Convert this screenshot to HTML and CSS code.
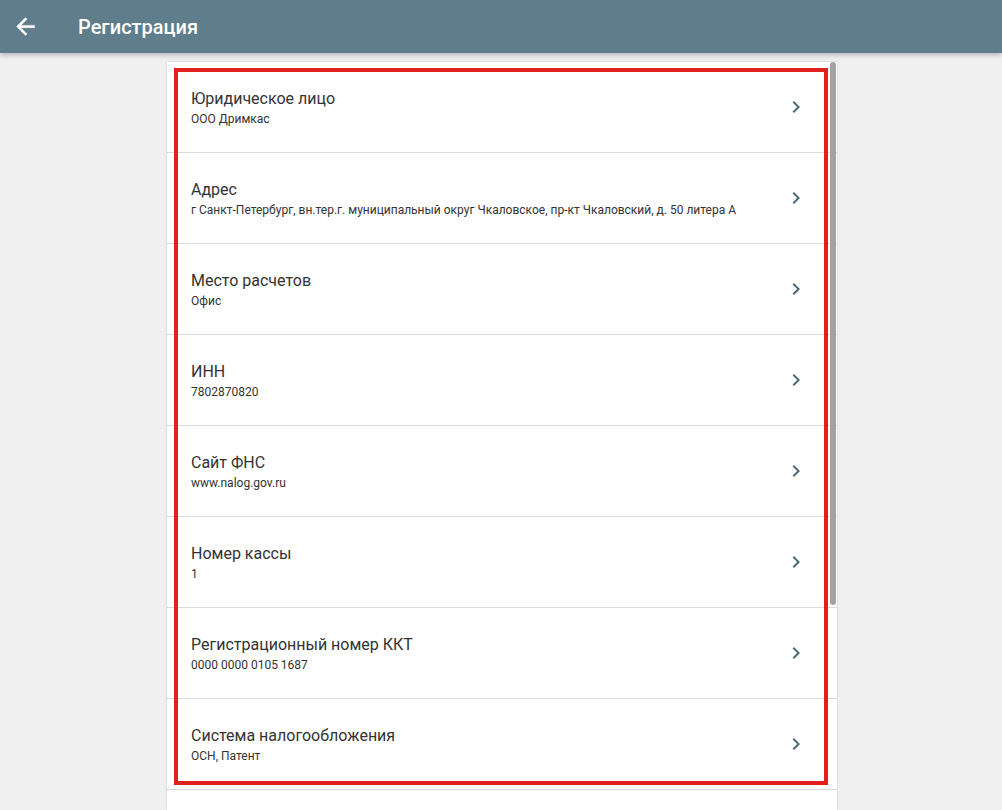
FILE: index.html
```html
<!DOCTYPE html>
<html lang="ru">
<head>
    <meta charset="UTF-8">
    <title>Регистрация</title>
    <link rel="stylesheet" href="styles.css">
</head>
<body>
<div class="app">
    <div class="top_bar">
        <span class="back_btn">
            <svg width="27" height="27" viewBox="0 0 24 24"><path fill="#fff" d="M20 11H7.83l5.59-5.59L12 4l-8 8 8 8 1.41-1.41L7.83 13H20v-2z" stroke="#fff" stroke-width="0.4"/></svg>
        </span>
        <span class="top_title">Регистрация</span>
    </div>

    <div class="content">
        <div class="card">
            <div class="row">
                <div class="row_text">
                    <p class="row_title">Юридическое лицо</p>
                    <p class="row_value">ООО Дримкас</p>
                </div>
                <svg class="chevron" width="24" height="24" viewBox="0 0 24 24"><path d="M10 6L8.59 7.41 13.17 12l-4.58 4.59L10 18l6-6z"/></svg>
            </div>
            <div class="row">
                <div class="row_text">
                    <p class="row_title">Адрес</p>
                    <p class="row_value">г Санкт-Петербург, вн.тер.г. муниципальный округ Чкаловское, пр-кт Чкаловский, д. 50 литера А</p>
                </div>
                <svg class="chevron" width="24" height="24" viewBox="0 0 24 24"><path d="M10 6L8.59 7.41 13.17 12l-4.58 4.59L10 18l6-6z"/></svg>
            </div>
            <div class="row">
                <div class="row_text">
                    <p class="row_title">Место расчетов</p>
                    <p class="row_value">Офис</p>
                </div>
                <svg class="chevron" width="24" height="24" viewBox="0 0 24 24"><path d="M10 6L8.59 7.41 13.17 12l-4.58 4.59L10 18l6-6z"/></svg>
            </div>
            <div class="row">
                <div class="row_text">
                    <p class="row_title">ИНН</p>
                    <p class="row_value">7802870820</p>
                </div>
                <svg class="chevron" width="24" height="24" viewBox="0 0 24 24"><path d="M10 6L8.59 7.41 13.17 12l-4.58 4.59L10 18l6-6z"/></svg>
            </div>
            <div class="row">
                <div class="row_text">
                    <p class="row_title">Сайт ФНС</p>
                    <p class="row_value">www.nalog.gov.ru</p>
                </div>
                <svg class="chevron" width="24" height="24" viewBox="0 0 24 24"><path d="M10 6L8.59 7.41 13.17 12l-4.58 4.59L10 18l6-6z"/></svg>
            </div>
            <div class="row">
                <div class="row_text">
                    <p class="row_title">Номер кассы</p>
                    <p class="row_value">1</p>
                </div>
                <svg class="chevron" width="24" height="24" viewBox="0 0 24 24"><path d="M10 6L8.59 7.41 13.17 12l-4.58 4.59L10 18l6-6z"/></svg>
            </div>
            <div class="row">
                <div class="row_text">
                    <p class="row_title">Регистрационный номер ККТ</p>
                    <p class="row_value">0000 0000 0105 1687</p>
                </div>
                <svg class="chevron" width="24" height="24" viewBox="0 0 24 24"><path d="M10 6L8.59 7.41 13.17 12l-4.58 4.59L10 18l6-6z"/></svg>
            </div>
            <div class="row">
                <div class="row_text">
                    <p class="row_title">Система налогообложения</p>
                    <p class="row_value">ОСН, Патент</p>
                </div>
                <svg class="chevron" width="24" height="24" viewBox="0 0 24 24"><path d="M10 6L8.59 7.41 13.17 12l-4.58 4.59L10 18l6-6z"/></svg>
            </div>

            <!-- полоса прокрутки и красная рамка поверх списка -->
            <div class="scroll_thumb"></div>
            <div class="highlight"></div>
        </div>
    </div>
</div>
</body>
</html>
```

FILE: styles.css
```css
html, body{
    margin: 0;
    padding: 0;
    height: 100%;
}
body{
    background: #f0f0f0;
    font-family: Roboto, "Liberation Sans", Arial, sans-serif;
    color: #333333;
    overflow: hidden;
}
.app{
    display: flex;
    flex-direction: column;
    height: 100%;
}

/*верхняя панель*/
.top_bar{
    height: 53px;
    flex-shrink: 0;
    background: #607d8b;
    display: flex;
    align-items: center;
    box-shadow: 0 2px 5px rgba(0, 0, 0, 0.25);
    position: relative;
    z-index: 2;
}
.back_btn{
    width: 27px;
    height: 27px;
    margin-left: 12px;
    display: flex;
}
.top_title{
    margin-left: 39px;
    color: #ffffff;
    font-size: 20px;
    font-weight: 500;
}

.content{
    flex: 1;
    padding-top: 9px;
    display: flex;
    min-height: 0;
}

/*карточка со списком*/
.card{
    position: relative;
    width: 670px;
    margin-left: 167px;
    background: #ffffff;
    box-shadow: 0 0 2px rgba(0, 0, 0, 0.18);
}

.row{
    height: 90px;
    border-bottom: 1px solid #dcdcdc;
    display: flex;
    align-items: center;
    padding-left: 24px;
    padding-right: 29px;
}
.row_text{
    flex: 1;
    padding-top: 4px;
}
.row_text p{
    margin: 0;
}
.row_title{
    font-size: 16px;
    line-height: 21px;
    color: #333333;
}
.row_value{
    font-size: 12px;
    line-height: 21px;
    color: #333333;
}
.chevron{
    flex-shrink: 0;
    fill: #4d6b77;
}

.scroll_thumb{
    position: absolute;
    top: 0;
    right: 1px;
    width: 6px;
    height: 543px;
    background: #a2a2a2;
    border-radius: 3px;
}

.highlight{
    position: absolute;
    left: 7px;
    top: 6px;
    width: 646px;
    height: 709px;
    border: 4px solid #e0201f;
}
```
